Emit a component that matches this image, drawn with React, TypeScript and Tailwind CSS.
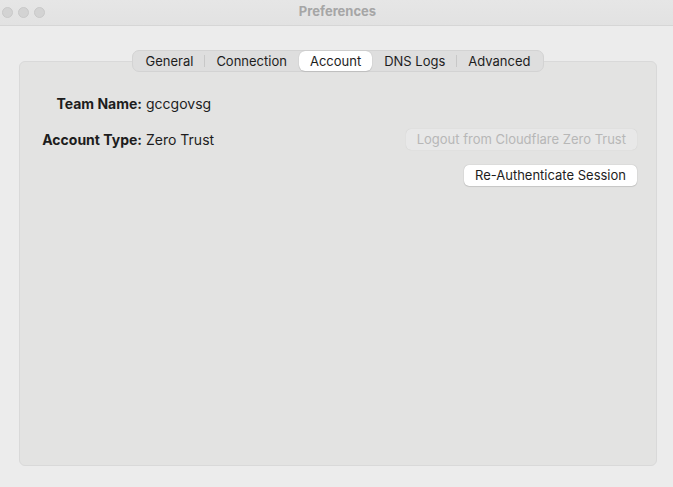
import React, { useState } from 'react';

const tabs = ['General', 'Connection', 'Account', 'DNS Logs', 'Advanced'];

const App: React.FC = () => {
  const [active, setActive] = useState('Account');
  const activeIdx = tabs.indexOf(active);

  return (
    <div
      className="w-[673px] h-[487px] bg-[#ececec] flex flex-col text-[13px] text-[#1d1d1d] overflow-hidden"
      style={{ fontFamily: 'Inter, "Liberation Sans", sans-serif' }}
    >
      {/* title bar */}
      <div className="h-[26px] shrink-0 flex items-center bg-gradient-to-b from-[#e6e6e6] to-[#e2e2e2] border-b border-[#d6d6d6]">
        <div className="flex gap-[5px] pl-[2px]">
          <span className="w-[11px] h-[11px] rounded-full bg-[#d3d3d3] border border-[#c9c9c9]" />
          <span className="w-[11px] h-[11px] rounded-full bg-[#d3d3d3] border border-[#c9c9c9]" />
          <span className="w-[11px] h-[11px] rounded-full bg-[#d3d3d3] border border-[#c9c9c9]" />
        </div>
        <div className="flex-1 text-center font-bold text-[#a6a6a6] pr-[43px] -mt-[2px]">Preferences</div>
      </div>

      <div className="flex-1 flex flex-col items-center pt-[24px] pl-[19px] pr-[16px] pb-[21px]">
        {/* segmented control */}
        <div className="relative z-10 flex items-center h-[22px] rounded-[7px] bg-[#dedede] border border-[#d3d3d3] px-[1px]">
          {tabs.map((t, i) => {
            const isActive = t === active;
            const showSep = i > 0 && i !== activeIdx && i - 1 !== activeIdx;
            return (
              <React.Fragment key={t}>
                {i > 0 && (
                  <span className={`w-px h-[12px] ${showSep ? 'bg-[#c8c8c8]' : 'bg-transparent'}`} />
                )}
                <button
                  onClick={() => setActive(t)}
                  className={`h-[20px] px-[11px] rounded-[6px] leading-[20px] ${
                    isActive ? 'bg-white shadow-[0_0_1px_rgba(0,0,0,0.25),0_1px_1px_rgba(0,0,0,0.08)]' : ''
                  }`}
                >
                  {t}
                </button>
              </React.Fragment>
            );
          })}
        </div>

        {/* panel */}
        <div className="-mt-[11px] w-full flex-1 rounded-[6px] bg-[#e3e3e2] border border-[#d9d9d9] pt-[31px] pr-[19px]">
          <div className="grid grid-cols-[122px_1fr] auto-rows-[21px] gap-y-[15px] items-center">
            <div className="text-right font-bold text-[14px]">Team Name:</div>
            <div className="pl-[4px] text-[14px]">gccgovsg</div>

            <div className="text-right font-bold text-[14px]">Account Type:</div>
            <div className="pl-[4px] flex items-center justify-between">
              <span className="text-[14px]">Zero Trust</span>
              <button
                disabled
                className="h-[21px] px-[11px] rounded-[5px] bg-[#e8e8e8] text-[#b7b7b7] shadow-[0_0_1px_rgba(0,0,0,0.15)]"
              >
                Logout from Cloudflare Zero Trust
              </button>
            </div>

            <div />
            <div className="flex justify-end">
              <button className="h-[21px] px-[11px] rounded-[5px] bg-white shadow-[0_0_1px_rgba(0,0,0,0.3),0_1px_1px_rgba(0,0,0,0.1)]">
                Re-Authenticate Session
              </button>
            </div>
          </div>
        </div>
      </div>
    </div>
  );
};

export default App;
